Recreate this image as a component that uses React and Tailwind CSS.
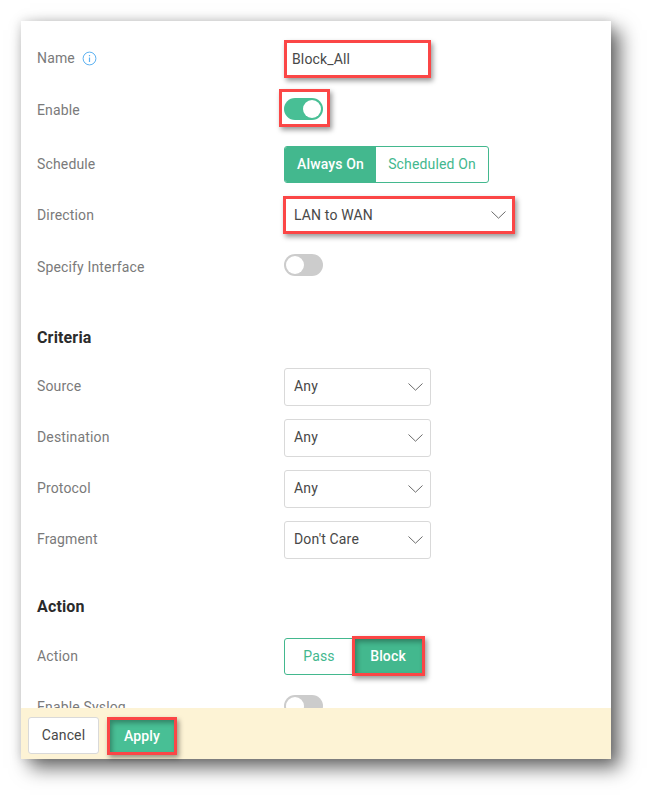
const font = { fontFamily: "Roboto, sans-serif", letterSpacing: "0.15px" };

function Chevron({ className = "" }) {
  return (
    <svg width="15" height="8" viewBox="0 0 15 8" fill="none" className={className}>
      <path d="M0.5 0.5 L7.5 7.2 L14.5 0.5" stroke="#6b6b6b" strokeWidth="1" />
    </svg>
  );
}

function Toggle({ on, className = "" }) {
  return (
    <div className={"flex h-[22px] w-[39px] items-center rounded-full p-[2px] " + (on ? "justify-end bg-[#48bf95] " : "justify-start bg-[#cccccc] ") + className}>
      <div className="h-[18px] w-[18px] rounded-full bg-white" />
    </div>
  );
}

function Row({ label, children, className = "", labelClass = "" }) {
  return (
    <div className={"flex h-[38px] items-center " + className}>
      <div className={"flex w-[247px] shrink-0 items-center gap-[7px] text-[14px] text-[#7a7a7a] " + labelClass}>{label}</div>
      {children}
    </div>
  );
}

function Select({ value }) {
  return (
    <div className="flex h-[38px] w-[147px] items-center justify-between rounded-[3px] border border-[#d9d9d9] pl-[9px] pr-[7px] text-[14px] text-[#484848]">
      <span className="mb-[2px]">{value}</span>
      <Chevron />
    </div>
  );
}

const frame = "pointer-events-none absolute border-[3px] border-[#fb4646] shadow-[2px_3px_5px_rgba(0,0,0,0.4)]";
const frameInset = "pointer-events-none absolute border-[3px] border-[#fb4646] shadow-[2px_3px_5px_rgba(0,0,0,0.4),inset_2px_3px_5px_rgba(0,0,0,0.3)]";

export default function App() {
  return (
    <div className="h-[801px] w-[653px] overflow-hidden bg-white pl-[21px] pt-[21px]" style={font}>
      <div className="flex h-[738px] w-[590px] flex-col bg-white shadow-[9px_9px_18px_rgba(0,0,0,0.58),0_0_10px_rgba(0,0,0,0.14)]">
        <div className="h-[687px] overflow-hidden pl-[16px] pt-[19px]">
          <Row labelClass="pb-[2px]" label={<><span>Name</span><svg width="15" height="15" viewBox="0 0 15 15" fill="none"><circle cx="7.5" cy="7.5" r="6.4" stroke="#5db2f2" strokeWidth="1" /><path d="M7.5 6.5V11M7.5 4V5.2" stroke="#5db2f2" strokeWidth="1.2" /></svg></>}>
            <div className="relative flex h-[38px] w-[147px] items-center pl-[8px] text-[14px] text-[#484848]">
              Block_All
              <div className={frame + " inset-0"} />
            </div>
          </Row>
          <Row label="Enable" className="mt-[13px]">
            <div className="relative mb-[2px]">
              <Toggle on />
              <div className={frame + " -bottom-[7px] -left-[5px] -right-[7px] -top-[9px]"} />
            </div>
          </Row>
          <Row label="Schedule" className="mt-[16px]">
            <div className="flex h-[37px] w-[205px] overflow-hidden rounded-[3px] border border-[#43b88e] text-[14px]">
              <div className="flex w-[91px] items-center justify-center bg-[#43b88e] font-medium text-white">Always On</div>
              <div className="flex flex-1 items-center justify-center text-[#43b88e]">Scheduled On</div>
            </div>
          </Row>
          <Row label="Direction" className="mt-[13px]">
            <div className="relative flex h-[38px] w-[232px] -translate-x-px items-center justify-between pl-[11px] pr-[9px] text-[14px] text-[#484848]">
              <span>LAN to WAN</span>
              <Chevron />
              <div className={frame + " inset-0"} />
            </div>
          </Row>
          <Row label="Specify Interface" className="mt-[14px]">
            <Toggle className="mb-[4px]" />
          </Row>
          <h2 className="mt-[40px] h-[24px] text-[16px] font-bold leading-[24px] text-[#2b2b2b]">Criteria</h2>
          <Row label="Source" labelClass="pb-[2px]" className="mt-[18px]"><Select value="Any" /></Row>
          <Row label="Destination" labelClass="pb-[2px]" className="mt-[13px]"><Select value="Any" /></Row>
          <Row label="Protocol" labelClass="pb-[2px]" className="mt-[13px]"><Select value="Any" /></Row>
          <Row label="Fragment" labelClass="pb-[2px]" className="mt-[13px]"><Select value="Don't Care" /></Row>
          <h2 className="mt-[36px] h-[24px] text-[16px] font-bold leading-[24px] text-[#2b2b2b]">Action</h2>
          <Row label="Action" className="mt-[18px]">
            <div className="flex h-[37px] text-[14px]">
              <div className="flex w-[70px] items-center justify-center rounded-l-[3px] border border-[#43b88e] text-[#43b88e]">Pass</div>
              <div className="relative flex w-[70px] items-center justify-center bg-[#43b88e] font-medium text-white">
                <span className="mr-[2px]">Block</span>
                <div className={frameInset + " -bottom-px -left-[2px] -right-[1px] -top-[2px]"} />
              </div>
            </div>
          </Row>
          <Row label="Enable Syslog" className="mt-[13px]">
            <Toggle className="mb-[2px]" />
          </Row>
        </div>
        <div className="flex h-[51px] items-start gap-[8px] bg-[#fdf3d5] pl-[7px] pt-[9px] text-[14px]">
          <div className="flex h-[37px] w-[71px] items-center justify-center rounded-[3px] border border-[#d9d9d9] bg-white text-[#484848]">Cancel</div>
          <div className="relative flex h-[38px] w-[70px] items-center justify-center bg-[#48bf95] font-medium text-white">
            Apply
            <div className={frameInset + " inset-0"} />
          </div>
        </div>
      </div>
    </div>
  );
}
